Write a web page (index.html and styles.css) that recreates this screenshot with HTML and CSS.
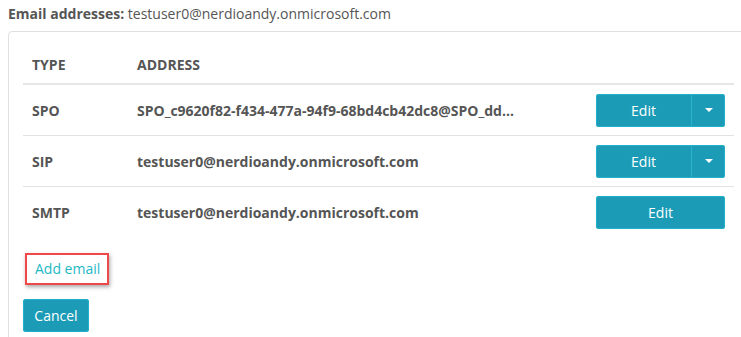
FILE: index.html
```html
<!DOCTYPE html>
<html>
<head>
<meta charset="utf-8">
<link rel="stylesheet" href="styles.css">
</head>
<body>
<div class="title"><b>Email addresses:</b> testuser0@nerdioandy.onmicrosoft.com</div>
<div class="card">
  <table class="tbl">
    <thead>
      <tr><th class="c-type">TYPE</th><th class="c-addr">ADDRESS</th><th class="c-act"></th></tr>
    </thead>
    <tbody>
      <tr>
        <td class="c-type">SPO</td>
        <td class="c-addr">SPO_c9620f82-f434-477a-94f9-68bd4cb42dc8@SPO_dd...</td>
        <td class="c-act"><div class="split"><span class="btn-main">Edit</span><span class="btn-caret"><span class="caret"></span></span></div></td>
      </tr>
      <tr>
        <td class="c-type">SIP</td>
        <td class="c-addr">testuser0@nerdioandy.onmicrosoft.com</td>
        <td class="c-act"><div class="split"><span class="btn-main">Edit</span><span class="btn-caret"><span class="caret"></span></span></div></td>
      </tr>
      <tr>
        <td class="c-type">SMTP</td>
        <td class="c-addr">testuser0@nerdioandy.onmicrosoft.com</td>
        <td class="c-act"><div class="single">Edit</div></td>
      </tr>
    </tbody>
  </table>
  <div class="add-wrap"><a class="add" href="#">Add email</a></div>
  <div class="cancel">Cancel</div>
</div>
</body>
</html>
```
FILE: styles.css
```css
html, body { margin: 0; padding: 0; background: #fff; overflow: hidden; }
body {
  font-family: "Open Sans", "Liberation Sans", sans-serif;
  font-size: 14px;
  color: #555;
  padding: 4px 0 0 8px;
}
.title { line-height: 20px; color: #555; }
.title b { font-weight: 700; }
.card {
  margin-top: 7px;
  width: 760px;
  height: 320px;
  border: 1px solid #e0e0e0;
  border-radius: 4px;
  padding: 14px 0 0 14px;
  box-sizing: border-box;
}
.tbl {
  width: 711px;
  border-collapse: collapse;
}
.tbl th {
  text-align: left;
  font-weight: 700;
  color: #555;
  font-size: 14px;
  height: 37px;
  padding: 0 9px;
  border-bottom: 2px solid #e6e6e6;
  vertical-align: middle;
}
.tbl td {
  font-weight: 700;
  color: #555;
  height: 50px;
  padding: 0 9px;
  border-top: 1px solid #e2e2e2;
  vertical-align: middle;
}
.tbl tbody tr:first-child td { border-top: none; height: 50px; }
.c-type { width: 87px; }
.c-act { width: 130px; padding-right: 8px !important; padding-left: 0 !important; }
.split, .single {
  display: flex;
  width: 129px;
  height: 33px;
  border-radius: 3px;
  overflow: hidden;
  background: #1b9bb6;
  color: #fff;
  font-weight: 400;
  box-shadow: inset 0 0 0 1px #22afcc;
}
.btn-main {
  width: 95px;
  display: flex;
  align-items: center;
  justify-content: center;
  border-right: 1px solid #28b4d0;
}
.btn-caret {
  flex: 1;
  display: flex;
  align-items: center;
  justify-content: center;
}
.caret {
  width: 0; height: 0;
  border-left: 4px solid transparent;
  border-right: 4px solid transparent;
  border-top: 4px solid #fff;
}
.single { align-items: center; justify-content: center; }
.add-wrap {
  margin-top: 16px;
  display: inline-block;
  border: 2px solid #f04848;
  padding: 4px 7px 4px 8px;
  margin-left: 2px;
  box-shadow: 1px 2px 4px rgba(0,0,0,0.35);
  line-height: 20px;
}
.add { color: #22b8c6; text-decoration: none; font-weight: 400; }
.cancel {
  margin-top: 14px;
  width: 66px;
  height: 33px;
  border-radius: 3px;
  background: #1b9bb6;
  color: #fff;
  display: flex;
  align-items: center;
  justify-content: center;
  box-shadow: inset 0 0 0 1px #22afcc;
}
```
